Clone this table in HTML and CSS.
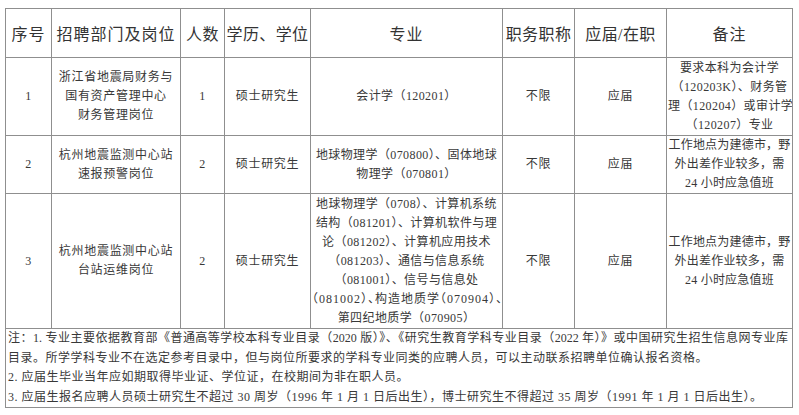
FILE: index.html
```html
<!DOCTYPE html>
<html lang="zh-CN">
<head>
<meta charset="utf-8">
<title>招聘岗位表</title>
<link rel="stylesheet" href="styles.css">
</head>
<body>
<div class="page">
<table class="jobs">
  <colgroup>
    <col class="c1"><col class="c2"><col class="c3"><col class="c4">
    <col class="c5"><col class="c6"><col class="c7"><col class="c8">
  </colgroup>
  <thead>
    <tr class="r-head">
      <th>序号</th>
      <th>招聘部门及岗位</th>
      <th class="tight">人数</th>
      <th class="tight">学历、学位</th>
      <th>专业</th>
      <th class="tight">职务职称</th>
      <th class="tight">应届/在职</th>
      <th>备注</th>
    </tr>
  </thead>
  <tbody>
    <tr class="r1">
      <td>1</td>
      <td class="pos">浙江省地震局财务与<br>国有资产管理中心<br>财务管理岗位</td>
      <td>1</td>
      <td class="pos">硕士研究生</td>
      <td class="major">会计学（120201）</td>
      <td class="pos">不限</td>
      <td class="pos">应届</td>
      <td class="note wide">要求本科为会计学<br>（120203K）、财务管<br>理（120204）或审计学<br>（120207）专业</td>
    </tr>
    <tr class="r2">
      <td>2</td>
      <td class="pos">杭州地震监测中心站<br>速报预警岗位</td>
      <td>2</td>
      <td class="pos">硕士研究生</td>
      <td class="major">地球物理学（070800）、固体地球<br>物理学（070801）</td>
      <td class="pos">不限</td>
      <td class="pos">应届</td>
      <td class="note">工作地点为建德市，野<br>外出差作业较多，需<br>24 小时应急值班</td>
    </tr>
    <tr class="r3">
      <td>3</td>
      <td class="pos">杭州地震监测中心站<br>台站运维岗位</td>
      <td>2</td>
      <td class="pos">硕士研究生</td>
      <td class="major">地球物理学（0708）、计算机系统<br>结构（081201）、计算机软件与理<br>论（081202）、计算机应用技术<br>（081203）、通信与信息系统<br>（081001）、信号与信息处<br><span class="halt">（081002）、构造地质学（070904）、</span><br>第四纪地质学（070905）</td>
      <td class="pos">不限</td>
      <td class="pos">应届</td>
      <td class="note">工作地点为建德市，野<br>外出差作业较多，需<br>24 小时应急值班</td>
    </tr>
    <tr class="r-notes">
      <td colspan="8" class="notes">
        <div class="nl full">注：1. 专业主要依据教育部《普通高等学校本科专业目录（2020 版）》、《研究生教育学科专业目录（2022 年）》或中国研究生招生信息网专业库</div>
        <div class="nl">目录。所学学科专业不在选定参考目录中，但与岗位所要求的学科专业同类的应聘人员，可以主动联系招聘单位确认报名资格。</div>
        <div class="nl">2. 应届生毕业当年应如期取得毕业证、学位证，在校期间为非在职人员。</div>
        <div class="nl">3. 应届生报名应聘人员硕士研究生不超过 30 周岁（1996 年 1 月 1 日后出生），博士研究生不得超过 35 周岁（1991 年 1 月 1 日后出生）。</div>
      </td>
    </tr>
  </tbody>
</table>
</div>
</body>
</html>
```

FILE: styles.css
```css
html, body {
  margin: 0;
  padding: 0;
  background: #ffffff;
}

body {
  font-family: "Liberation Serif", "Noto Sans CJK SC", serif;
  color: #383838;
}

.page {
  padding: 8px 0 0 5px;
}

.jobs {
  border-collapse: collapse;
  table-layout: fixed;
  width: 787px;
}

.c1 { width: 46px; }
.c2 { width: 129px; }
.c3 { width: 44px; }
.c4 { width: 86px; }
.c5 { width: 192px; }
.c6 { width: 72px; }
.c7 { width: 92px; }
.c8 { width: 126px; }

.jobs th,
.jobs td {
  border: 1px solid #8f8f8f;
  padding: 0 1px;
  text-align: center;
  vertical-align: middle;
  white-space: nowrap;
  overflow: hidden;
}

.jobs th {
  font-weight: normal;
  font-size: 16px;
  letter-spacing: 1px;
  color: #333333;
}

.jobs th.tight {
  letter-spacing: 0.4px;
}

.jobs td {
  font-size: 12px;
  line-height: 19px;
  letter-spacing: 0.7px;
}

.r-head { height: 49px; }
.r1 { height: 78px; }
.r2 { height: 57px; }
.r3 { height: 135px; }
.r-notes { height: 77px; }

.jobs td.major {
  letter-spacing: 0.4px;
}

.jobs td.note {
  letter-spacing: 0.2px;
}

.jobs td.note.wide {
  letter-spacing: 0.4px;
}

.halt {
  font-feature-settings: "halt" 1;
  letter-spacing: 1px;
}

.jobs td.notes {
  text-align: left;
  padding: 0 4px 0 2px;
  line-height: 19.5px;
  letter-spacing: 0.5px;
}

.nl {
  white-space: nowrap;
}

.nl.full {
  white-space: normal;
  text-align: justify;
  text-align-last: justify;
  letter-spacing: 0;
}
```
